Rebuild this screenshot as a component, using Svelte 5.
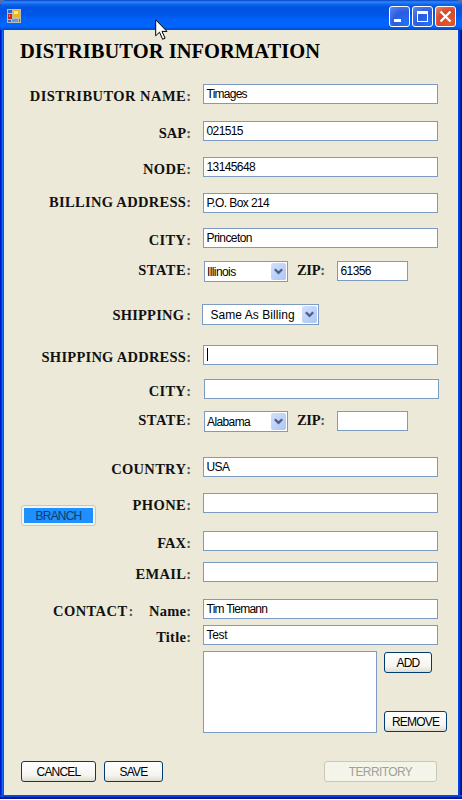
<script>
  // gap: space above the row; drop: label offset inside the row; ls: letter spacing
  const rows = [
    { label: 'DISTRIBUTOR NAME', ls: 0.45, gap: 0, drop: 4, value: 'Timages', vs: -0.75 },
    { label: 'SAP', ls: 0, gap: 17, drop: 4, value: '021515' },
    { label: 'NODE', ls: 0.3, gap: 16, drop: 4, value: '13145648' },
    { label: 'BILLING ADDRESS', ls: 0.3, gap: 16, drop: 1, value: 'P.O. Box 214', vdrop: 1 },
    { label: 'CITY', ls: 0.3, gap: 15, drop: 4, value: 'Princeton' },
    { label: 'STATE', ls: 0.5, gap: 13, drop: 1, state: 'Illinois', zip: '61356' },
    { label: 'SHIPPING', ls: 0.2, gap: 23, drop: 3, ship: 'Same As Billing' },
    { label: 'SHIPPING ADDRESS', ls: 0.25, gap: 21, drop: 4, value: '', caret: true },
    { label: 'CITY', ls: 0.3, gap: 14, drop: 4, value: '', shifted: true },
    { label: 'STATE', ls: 0.5, gap: 12, drop: 1, state: 'Alabama', zip: '' },
    { label: 'COUNTRY', ls: 0.3, gap: 26, drop: 4, value: 'USA' },
    { label: 'PHONE', ls: 0.4, gap: 16, drop: 4, value: '', branch: true },
    { label: 'FAX', ls: 0.1, gap: 18, drop: 4, value: '' },
    { label: 'EMAIL', ls: 0.3, gap: 11, drop: 4, value: '' },
    { label: 'Name', ls: 0.25, gap: 17, drop: 4, value: 'Tim Tiemann', contact: true, vs: -0.75 },
    { label: 'Title', ls: 0.25, gap: 6, drop: 4, value: 'Test', vs: -0.3 }
  ];
</script>

{#snippet arrow()}
  <span class="arrow">
    <svg width="9" height="7" viewBox="0 0 9 7"><path d="M.8 1.2 4.5 4.9 8.2 1.2" fill="none" stroke="#4d6185" stroke-width="2.3" /></svg>
  </span>
{/snippet}

<div class="window">
  <header>
    <svg class="app" width="14" height="14" viewBox="0 0 14 14">
      <path d="M0 0h14v14H0z" fill="#bdbcae" />
      <path d="M1 1h4v3H1zM1 11h3v2H1zM12 10h1v3h-1z" fill="#2c68cf" />
      <path d="M1 5h4v5H1z" fill="#c9231b" /><path d="M2 6h1v2H2z" fill="#ff8a72" />
      <path d="M6 1h7v7H6z" fill="#eeb51e" /><path d="M7 2h4v3H7z" fill="#ffe98c" />
      <path d="M5 10h6v3H5z" fill="#5d9bec" />
    </svg>
    <div class="controls">
      <span class="ctl"><svg width="21" height="21" viewBox="0 0 21 21"><path d="M5 13h7v3H5z" fill="#fff" /></svg></span>
      <span class="ctl"><svg width="21" height="21" viewBox="0 0 21 21"><path d="M5 5h11v11H5zM6 8v7h9V8z" fill="#fff" fill-rule="evenodd" /></svg></span>
      <span class="ctl close"><svg width="21" height="21" viewBox="0 0 21 21"><path d="m5.5 5.5 10 10m0-10-10 10" stroke="#fff" stroke-width="2.3" /></svg></span>
    </div>
    <svg class="cursor" width="13" height="22" viewBox="0 0 13 22"><path d="M.7.8v16l3.8-3.6 3.1 7.1 2.5-1.1-3.1-6.8h5z" fill="#fff" stroke="#000" /></svg>
  </header>
  <main>
    <h1>DISTRIBUTOR INFORMATION</h1>
    {#each rows as r}
      <div class="row" style:margin-top="{r.gap}px">
        <div class="side">
          {#if r.branch}<button class="branch"><span>BRANCH</span></button>{/if}
          {#if r.contact}<span class="label contact">CONTACT<i>:</i></span>{/if}
          <span class="label end" style:letter-spacing="{r.ls}px" style:margin-top="{r.drop}px">{r.label}<i class:apart={r.ship}>:</i></span>
        </div>
        {#if r.state}
          <div class="select state"><span>{r.state}</span>{@render arrow()}</div>
          <span class="label ziplabel">ZIP<i>:</i></span>
          <div class="field zip">{r.zip}</div>
        {:else if r.ship}
          <div class="select ship"><span>{r.ship}</span>{@render arrow()}</div>
        {:else}
          <div class="field" class:shifted={r.shifted} class:low={r.vdrop} style:letter-spacing="{r.vs ?? -0.6}px">{#if r.caret}<b class="caret"></b>{/if}{r.value}</div>
        {/if}
      </div>
    {/each}
    <div class="people">
      <div class="list"></div>
      <div class="actions">
        <button class="add">ADD</button>
        <button class="remove">REMOVE</button>
      </div>
    </div>
    <footer>
      <button class="cancel">CANCEL</button>
      <button class="save">SAVE</button>
      <button class="territory" disabled>TERRITORY</button>
    </footer>
  </main>
</div>

<style>
  :global(body) { background: #fff; overflow: hidden; }
  :global(#app) { height: 799px; background: linear-gradient(#5a6da5 0 12px, #00138c 12px); }
  .window {
    box-sizing: border-box; width: 462px; height: 799px; overflow: hidden;
    padding: 0 4px 4px; border-radius: 7px 7px 0 0; display: flex; flex-direction: column;
    background:
      linear-gradient(#0855dd, #003bda 50%, #001ea0 50%, #00138c) bottom / 100% 4px no-repeat,
      linear-gradient(90deg, #0019cf 0 1px, #0831d9 1px 2px, #166aee 2px 3px, #0855dd 3px 4px, #0855dd 4px 458px, #0046e0 458px 459px, #003bda 459px 460px, #001ea0 460px 461px, #00138c 461px);
  }
  header {
    position: relative; flex: none; height: 30px; margin: 0 -4px; box-sizing: border-box;
    display: flex; justify-content: space-between; padding: 6px 6px 0 7px;
    background: linear-gradient(#0842c0 0, #2f86ff 2px, #1268ee 4px, #0054e3 7px, #0055e5 14px, #0062fa 20px, #0066ff 26px, #005be8 28px, #0046cf 30px);
  }
  .app { margin-top: 3px; }
  .controls { display: flex; gap: 2px; }
  .ctl {
    box-sizing: border-box; width: 21px; height: 21px; border: 1px solid #fff; border-radius: 3px;
    background: radial-gradient(circle at 80% 85%, #2472f2, #2a5be0 50%, #5e88ee 100%);
  }
  .ctl svg { display: block; margin: -1px; }
  .close { background: radial-gradient(circle at 75% 80%, #e35a2c, #d9472a 55%, #e88a70 100%); }
  .cursor { position: absolute; left: 155px; top: 19px; z-index: 2; }
  main { flex: 1; background: #ece9d8; padding-left: 16px; }
  h1 {
    margin: 0; padding-top: 9px; height: 45px; color: #000; white-space: nowrap;
    font: bold 20.5px/24px 'Liberation Serif', serif; letter-spacing: 0.03px;
  }
  .row { display: flex; align-items: flex-start; height: 20px; }
  .side { width: 171px; height: 20px; margin-right: 12px; display: flex; align-items: flex-start; flex: none; }
  .label { font: bold 14.5px/16px 'Liberation Serif', serif; color: #111; white-space: nowrap; }
  .label i { font-style: normal; color: #555; letter-spacing: 0; }
  .label .apart { margin-left: 2px; }
  .end { margin-left: auto; }
  .contact { letter-spacing: 0.45px; margin: 4px 0 0 33px; }
  .contact i { margin-left: 1px; }
  .field, .select, .list { box-sizing: border-box; border: 1px solid #7b9cc0; background: #fff; }
  .field, .select {
    font: 12px/18px 'Liberation Sans', Arial, sans-serif; letter-spacing: -0.62px; color: #000; white-space: nowrap;
  }
  .field { width: 235px; height: 20px; padding-left: 2.5px; }
  .shifted { margin-left: 1px; }
  .low { line-height: 19px; }
  .caret { display: inline-block; width: 1px; height: 13px; background: #000; margin-top: 2px; }
  .select { display: flex; justify-content: space-between; height: 21px; padding: 1px 1px 1px 2px; }
  .state { width: 84px; margin-left: 1px; letter-spacing: -0.6px; }
  .ship { width: 117px; margin-left: -1px; padding-left: 7.5px; font-size: 12px; letter-spacing: 0.05px; }
  .arrow {
    width: 15px; height: 17px; border-radius: 2px; display: flex; align-items: center; justify-content: center;
    background: linear-gradient(135deg, #d3e0fd, #bccffa 60%, #aec5f4);
  }
  .ziplabel { width: 40px; box-sizing: border-box; margin: 1px 0 0 9px; letter-spacing: -0.3px; }
  .zip { width: 71px; letter-spacing: -0.6px; }
  .people { display: flex; gap: 7px; margin: 6px 0 0 183px; }
  .list { width: 174px; height: 82px; }
  .actions { display: flex; flex-direction: column; justify-content: space-between; padding: 1px 0; }
  button {
    box-sizing: border-box; height: 21px; margin: 0; padding: 0; border: 1px solid #003c74; border-radius: 3px;
    font: 12px/20px 'Liberation Sans', Arial, sans-serif; letter-spacing: -0.8px; color: #000;
    background: linear-gradient(#fff, #f5f4ef 70%, #e0dcd0);
  }
  .add { width: 48px; }
  .remove { width: 63px; }
  .branch { width: 75px; flex: none; margin: 12px 0 0 1px; padding: 2px; border-color: #c9c7ba; background: #f5f4ea; }
  .branch span { display: block; height: 15px; line-height: 16px; background: #1e90ff; color: #123c69; }
  footer { display: flex; margin: 28px 0 0 1px; }
  .cancel { width: 75px; }
  .save { width: 59px; margin-left: 8px; }
  .territory { width: 113px; margin-left: 161px; border-color: #c9c7ba; background: #f5f4ea; color: #a1a192; letter-spacing: -0.6px; }
</style>
